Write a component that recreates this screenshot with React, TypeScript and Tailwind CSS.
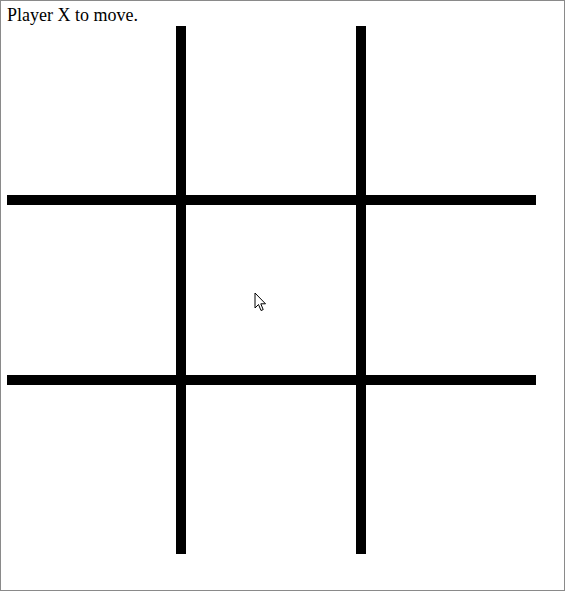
const cells = [0, 1, 2, 3, 4, 5, 6, 7, 8];

export default function App() {
  return (
    <div className="relative w-[565px] h-[591px] border border-[#8a8a8a] bg-white pl-[6px] pt-[4px] font-['Liberation_Serif',serif] text-black">
      <div className="text-[18px] leading-[21px]">Player X to move.</div>

      <div className="grid w-[529px] grid-cols-[169px_170px_170px] grid-rows-[169px_170px_169px] gap-[10px] bg-black">
        {cells.map((i) => (
          <div key={i} className="bg-white" />
        ))}
      </div>

      {/* mouse pointer caught in the shot */}
      <svg
        className="absolute left-[253px] top-[291px]"
        width="13"
        height="20"
        viewBox="0 0 13 20"
      >
        <path
          d="M1 1 L1 16 L4.5 12.5 L7 18.5 L9.2 17.6 L6.8 11.8 L11.5 11.8 Z"
          fill="white"
          stroke="black"
          strokeWidth="1"
          strokeLinejoin="miter"
        />
      </svg>
    </div>
  );
}
